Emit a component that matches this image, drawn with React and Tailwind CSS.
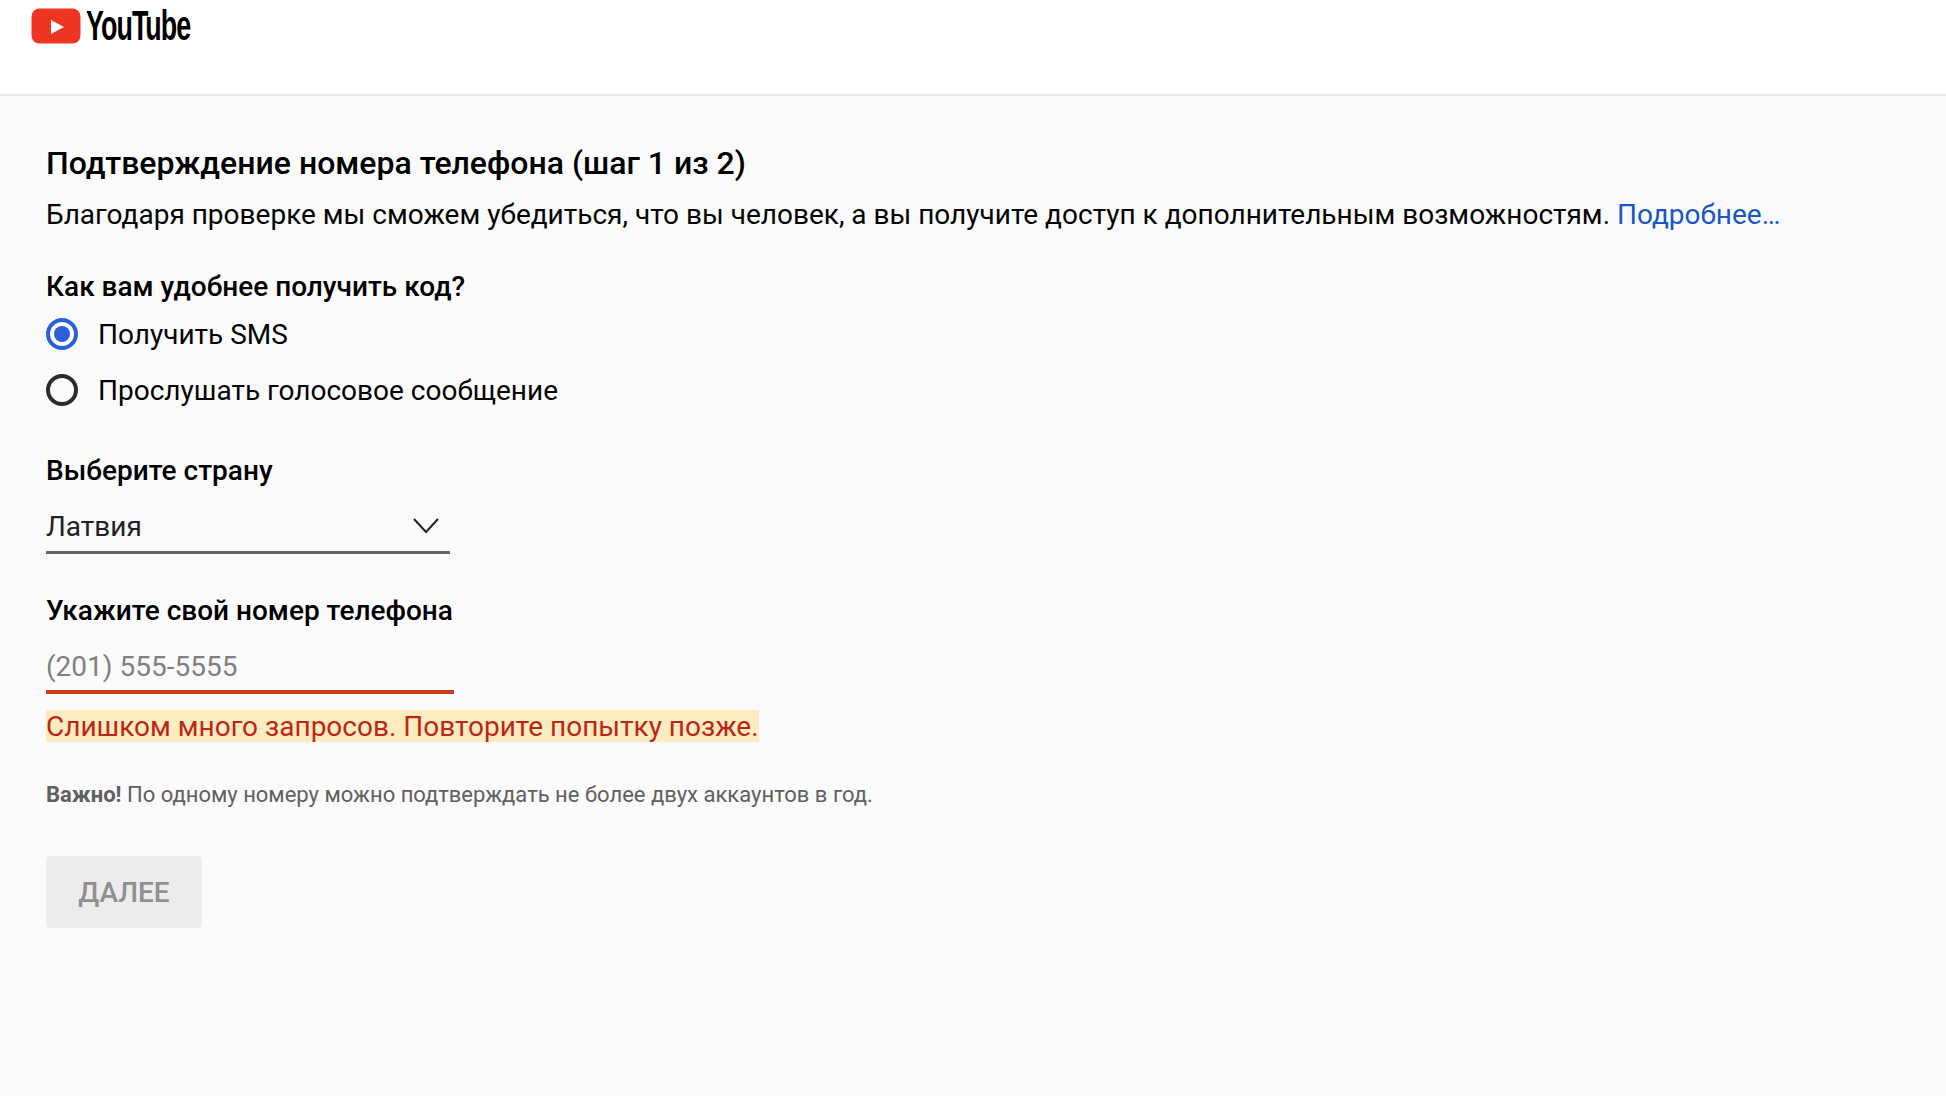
export default function App() {
  const font = "font-['Roboto','Noto_Sans',sans-serif]";
  return (
    <div className={`min-h-[1096px] bg-[#fafafa] ${font} text-[#030303]`}>
      <header className="h-[96px] bg-white border-b-2 border-[#e8e8e8] pl-[31px] pt-[8px]">
        <div className="flex items-center h-[36px]">
          <svg width="50" height="36" viewBox="0 0 50 36">
            <rect x="0.5" y="0.5" width="49" height="35" rx="8" fill="#ee3524" />
            <path d="M20 12L33 19L20 26Z" fill="#fff" />
          </svg>
          <span className="ml-[5px] inline-block origin-left scale-x-[0.64] text-[42px] leading-[36px] font-bold tracking-[-1.5px] text-black font-['Liberation_Sans',sans-serif]">YouTube</span>
        </div>
      </header>
      <main className="pl-[46px] pt-[46px]">
        <h1 className="text-[32px] leading-[42px] font-medium text-black">Подтверждение номера телефона (шаг 1 из 2)</h1>
        <p className="mt-[14px] text-[28px] leading-[34px]">
          Благодаря проверке мы сможем убедиться, что вы человек, а вы получите доступ к дополнительным возможностям.{" "}
          <a className="text-[#1a56c4]">Подробнее…</a>
        </p>
        <h2 className="mt-[38px] text-[28px] leading-[34px] font-medium text-black">Как вам удобнее получить код?</h2>
        <div className="mt-[14px] flex items-center h-[32px]">
          <span className="flex items-center justify-center w-[32px] h-[32px] rounded-full border-[4px] border-[#2b5fd9]">
            <span className="w-[16px] h-[16px] rounded-full bg-[#2b5fd9]" />
          </span>
          <span className="ml-[20px] pt-[2px] text-[28px] leading-[34px]">Получить SMS</span>
        </div>
        <div className="mt-[24px] flex items-center h-[32px]">
          <span className="w-[32px] h-[32px] rounded-full border-[4px] border-[#2b2b2b]" />
          <span className="ml-[20px] pt-[2px] text-[28px] leading-[34px]">Прослушать голосовое сообщение</span>
        </div>
        <h2 className="mt-[48px] text-[28px] leading-[34px] font-medium text-black">Выберите страну</h2>
        <div className="mt-[21px] w-[404px] h-[45px] flex items-start justify-between border-b-[3px] border-[#666] pr-[11px]">
          <span className="text-[28px] leading-[36px] text-[#222]">Латвия</span>
          <svg className="mt-[9px]" width="26" height="16" viewBox="0 0 26 16" fill="none" stroke="#222" strokeWidth="2">
            <path d="M1 1L13 14L25 1" />
          </svg>
        </div>
        <h2 className="mt-[40px] text-[28px] leading-[34px] font-medium text-black">Укажите свой номер телефона</h2>
        <div className="mt-[21px] w-[408px] h-[45px] border-b-[4px] border-[#cc3c1e] text-[28px] leading-[36px] text-[#808080]">(201) 555-5555</div>
        <div className="mt-[16px]">
          <span className="block w-fit h-[32px] bg-[#fbecc0] text-[28px] leading-[34px] text-[#bd2617]">Слишком много запросов. Повторите попытку позже.</span>
        </div>
        <p className="mt-[39px] text-[22px] leading-[28px] text-[#606060]"><b className="font-bold">Важно!</b> По одному номеру можно подтверждать не более двух аккаунтов в год.</p>
        <button className="mt-[47px] block w-[156px] h-[72px] pt-[2px] rounded-[4px] bg-[#ececec] text-[28px] font-medium text-[#909090]">ДАЛЕЕ</button>
      </main>
    </div>
  );
}
